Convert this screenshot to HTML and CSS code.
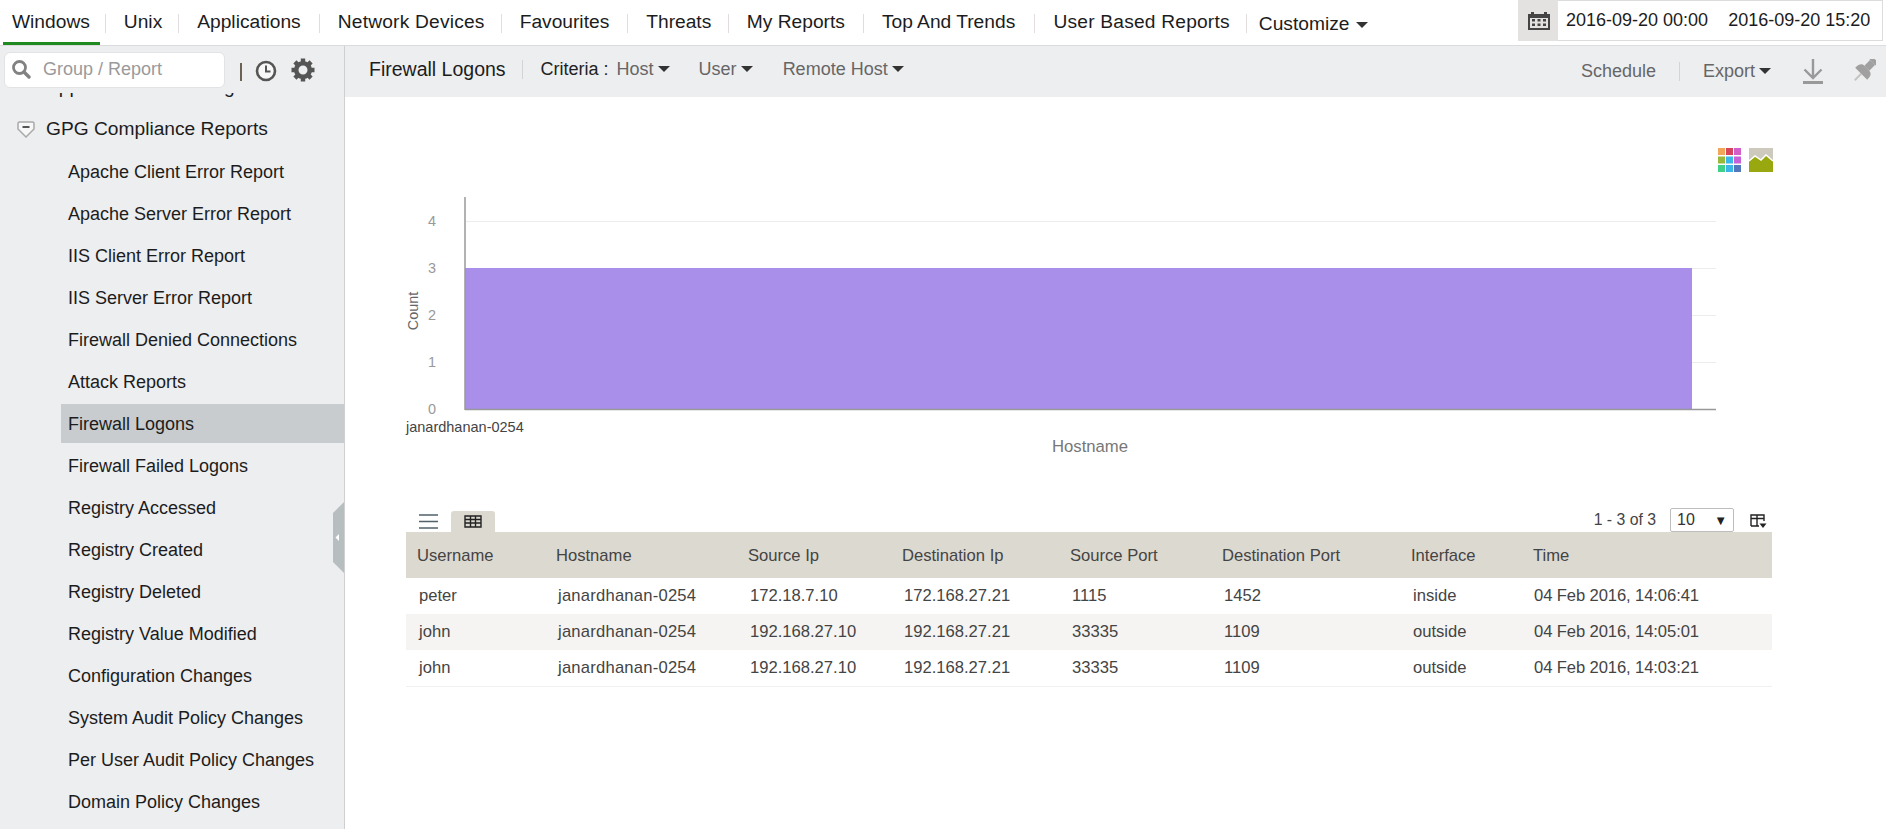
FILE: index.html
```html
<!DOCTYPE html>
<html lang="en">
<head>
<meta charset="utf-8">
<title>Firewall Logons</title>
<link rel="stylesheet" href="styles.css">
</head>
<body>
<header class="topbar">
  <nav class="nav">
    <a class="nav-link nav-first is-active">Windows</a><span class="nav-sep"></span>
    <a class="nav-link nav-tight">Unix</a><span class="nav-sep"></span>
    <a class="nav-link">Applications</a><span class="nav-sep"></span>
    <a class="nav-link nav-wide">Network Devices</a><span class="nav-sep"></span>
    <a class="nav-link">Favourites</a><span class="nav-sep"></span>
    <a class="nav-link nav-snug">Threats</a><span class="nav-sep"></span>
    <a class="nav-link">My Reports</a><span class="nav-sep"></span>
    <a class="nav-link nav-loose">Top And Trends</a><span class="nav-sep"></span>
    <a class="nav-link nav-wide">User Based Reports</a><span class="nav-sep"></span>
    <a class="nav-custom">Customize<i class="caret caret-nav"></i></a>
  </nav>
  <div class="dates">
    <span class="cal-box">
      <svg width="22" height="18" viewBox="0 0 22 18"><path d="M0 2h3V0h3v2h10V0h3v2h3v16H0z" fill="#444"/><rect x="2" y="6" width="18" height="10" fill="#e4e2e0"/><g fill="#444"><rect x="4" y="7" width="3" height="2.5"/><rect x="9.5" y="7" width="3" height="2.5"/><rect x="15" y="7" width="3" height="2.5"/><rect x="4" y="11.5" width="3" height="2.5"/><rect x="9.5" y="11.5" width="3" height="2.5"/><rect x="15" y="11.5" width="3" height="2.5"/></g></svg>
    </span>
    <span class="date-input">
      <span>2016-09-20 00:00</span>
      <span>2016-09-20 15:20</span>
    </span>
  </div>
</header>

<div class="layout">
  <aside class="sidebar">
    <div class="side-tools">
      <div class="search">
        <svg width="20" height="20" viewBox="0 0 20 20"><circle cx="8.5" cy="8.5" r="6" fill="none" stroke="#828282" stroke-width="2.8"/><path d="M13 13l5 5" stroke="#828282" stroke-width="3.4" stroke-linecap="round"/></svg>
        <span class="search-text">Group / Report</span>
      </div>
      <span class="tool-sep"></span>
      <svg class="tool-clock" width="22" height="22" viewBox="0 0 22 22"><circle cx="11" cy="11" r="9" fill="#f8f8f8" stroke="#555" stroke-width="2.6"/><path d="M11 5.5V11.5H15.5" fill="none" stroke="#555" stroke-width="2"/></svg>
      <svg class="tool-gear" width="26" height="26" viewBox="0 0 26 26"><g stroke="#555" stroke-width="4.4"><path d="M13 1.500V24.500M1.500 13H24.500M4.900 4.900L21.100 21.100M21.100 4.900L4.900 21.100"/></g><circle cx="13" cy="13" r="6.800" fill="#edeef0" stroke="#555" stroke-width="4.600"/></svg>
    </div>
    <div class="tree">
      <ul class="tree-list">
        <li class="tree-group tree-clipped">Application Monitoring</li>
        <li class="tree-group">
          <svg class="shield" width="18" height="17" viewBox="0 0 18 17"><path d="M2.500 1H15.500Q17 1 17 2.500V8L9 16L1 8V2.500Q1 1 2.500 1Z" fill="#f7f7f7" stroke="#a9a9a9" stroke-width="1.500"/><rect x="5.500" y="5" width="7" height="2" fill="#555"/></svg>
          GPG Compliance Reports
        </li>
        <li class="tree-item">Apache Client Error Report</li>
        <li class="tree-item">Apache Server Error Report</li>
        <li class="tree-item">IIS Client Error Report</li>
        <li class="tree-item">IIS Server Error Report</li>
        <li class="tree-item">Firewall Denied Connections</li>
        <li class="tree-item">Attack Reports</li>
        <li class="tree-item is-selected">Firewall Logons</li>
        <li class="tree-item">Firewall Failed Logons</li>
        <li class="tree-item">Registry Accessed</li>
        <li class="tree-item">Registry Created</li>
        <li class="tree-item">Registry Deleted</li>
        <li class="tree-item">Registry Value Modified</li>
        <li class="tree-item">Configuration Changes</li>
        <li class="tree-item">System Audit Policy Changes</li>
        <li class="tree-item">Per User Audit Policy Changes</li>
        <li class="tree-item">Domain Policy Changes</li>
      </ul>
    </div>
    <svg class="collapse" width="11" height="71" viewBox="0 0 11 71"><path d="M11 0V71L0 60V11Z" fill="#b7bebf"/><path d="M6 32V39L2.500 35.500Z" fill="#fff"/></svg>
  </aside>

  <main class="main">
    <div class="subbar">
      <h1 class="title">Firewall Logons</h1>
      <span class="sub-sep"></span>
      <span class="criteria">Criteria :</span>
      <a class="filter filter-host">Host<i class="caret"></i></a>
      <a class="filter filter-user">User<i class="caret"></i></a>
      <a class="filter filter-remote">Remote Host<i class="caret"></i></a>
      <div class="sub-actions">
        <a class="action">Schedule</a>
        <span class="sub-sep action-sep"></span>
        <a class="action">Export<i class="caret"></i></a>
        <svg class="icon-down" width="20" height="25" viewBox="0 0 20 25"><path d="M10 0V19M1.500 10.500L10 19L18.500 10.500" fill="none" stroke="#999" stroke-width="2.400"/><rect y="22" width="20" height="3" fill="#999"/></svg>
        <svg class="icon-pin" width="24" height="25" viewBox="0 0 24 25"><g transform="rotate(45 12 12)" fill="#a0a0a0"><rect x="7" y="-4" width="10" height="4" rx="2"/><rect x="8.500" y="0" width="7" height="8"/><path d="M3.500 16Q3.500 8 8.500 8H15.500Q20.500 8 20.500 16Z"/><rect x="11" y="16" width="2" height="9" fill="#c4c4c4"/></g></svg>
      </div>
    </div>

    <svg class="chart" width="1541" height="408" viewBox="345 97 1541 408">
      <rect x="1718" y="148" width="7" height="7" fill="#f2a65a"/>
      <rect x="1726" y="148" width="7" height="7" fill="#d6455d"/>
      <rect x="1734" y="148" width="7" height="7" fill="#d55fc8"/>
      <rect x="1718" y="156.500" width="7" height="7" fill="#9ab83a"/>
      <rect x="1726" y="156.500" width="7" height="7" fill="#3cb6e8"/>
      <rect x="1734" y="156.500" width="7" height="7" fill="#c860d8"/>
      <rect x="1718" y="165" width="7" height="7" fill="#3fd18a"/>
      <rect x="1726" y="165" width="7" height="7" fill="#3cb6e8"/>
      <rect x="1734" y="165" width="7" height="7" fill="#5577bb"/>
      <rect x="1749" y="148" width="24" height="24" fill="#cdc9bd"/>
      <path d="M1749 172V161L1755 156L1761 160L1766 155L1773 161V172Z" fill="#98a80e"/>
      <path d="M1749 161L1755 156L1761 160L1766 155L1773 161" fill="none" stroke="#fff" stroke-width="1.500"/>

      <g stroke="#ececec" stroke-width="1">
        <path d="M466 221.500H1716M466 268.500H1716M466 315.500H1716M466 362.500H1716"/>
      </g>
      <rect x="465" y="268" width="1227" height="141" fill="#a98fea"/>
      <path d="M465 197V410M465 409.500H1716" fill="none" stroke="#999" stroke-width="1.500"/>

      <g class="chart-tick">
        <text x="432" y="226">4</text>
        <text x="432" y="273">3</text>
        <text x="432" y="320">2</text>
        <text x="432" y="367">1</text>
        <text x="432" y="414">0</text>
      </g>
      <text class="chart-axis-y" transform="translate(418 311) rotate(-90)">Count</text>
      <text class="chart-cat" x="406" y="432">janardhanan-0254</text>
      <text class="chart-axis-x" x="1052" y="452">Hostname</text>
    </svg>

    <section class="report">
      <div class="report-tools">
        <svg class="icon-list" width="19" height="15" viewBox="0 0 19 15"><path d="M0 1H19M0 7.500H19M0 14H19" stroke="#51626b" stroke-width="1.500"/></svg>
        <span class="tab-active">
          <svg width="18" height="13" viewBox="0 0 18 13"><path d="M1 1H17V12H1ZM1 4.500H17M1 8H17M6.500 1V12M11.500 1V12" fill="none" stroke="#222" stroke-width="1.400"/></svg>
        </span>
        <span class="pager">1 - 3 of 3</span>
        <span class="page-size">10<i class="page-arrow">▼</i></span>
        <svg class="icon-cols" width="17" height="15" viewBox="0 0 17 15"><path d="M1 12V1H14V7M1 4.500H14M7 1V12M1 12H9" fill="none" stroke="#222" stroke-width="1.400"/><path d="M9.500 9.500H16.500L13 14Z" fill="#222"/></svg>
      </div>
      <table class="grid">
        <colgroup>
          <col class="c1"><col class="c2"><col class="c3"><col class="c4"><col class="c5"><col class="c6"><col class="c7"><col class="c8">
        </colgroup>
        <thead>
          <tr><th>Username</th><th>Hostname</th><th>Source Ip</th><th>Destination Ip</th><th>Source Port</th><th>Destination Port</th><th>Interface</th><th>Time</th></tr>
        </thead>
        <tbody>
          <tr><td>peter</td><td class="host">janardhanan-0254</td><td>172.18.7.10</td><td>172.168.27.21</td><td>1115</td><td>1452</td><td>inside</td><td class="time">04 Feb 2016, 14:06:41</td></tr>
          <tr class="alt"><td>john</td><td class="host">janardhanan-0254</td><td>192.168.27.10</td><td>192.168.27.21</td><td>33335</td><td>1109</td><td>outside</td><td class="time">04 Feb 2016, 14:05:01</td></tr>
          <tr><td>john</td><td class="host">janardhanan-0254</td><td>192.168.27.10</td><td>192.168.27.21</td><td>33335</td><td>1109</td><td>outside</td><td class="time">04 Feb 2016, 14:03:21</td></tr>
        </tbody>
      </table>
    </section>
  </main>
</div>
</body>
</html>
```
FILE: styles.css
```css
* { box-sizing: border-box; }
html, body { margin: 0; height: 100%; overflow: hidden; }
body { font-family: "Liberation Sans", Arial, sans-serif; color: #222; background: #fff; }

.topbar { display: flex; height: 46px; border-bottom: 1px solid #dcdcdc; justify-content: space-between; }
.nav { display: flex; align-items: flex-start; padding-left: 3px; font-size: 19.2px; color: #1c1c1c; }
.nav-link { display: block; height: 45px; padding: 0 18px; line-height: 44px; border-bottom: 3px solid transparent; white-space: nowrap; }
.nav-first { padding: 0 10px 0 9px; margin-right: 5px; }
.nav-tight { padding-right: 16px; }
.nav-snug { padding-right: 16.5px; }
.nav-loose { padding-right: 19.2px; }
.nav-wide { padding-right: 16px; letter-spacing: 0.200px; }
.is-active { border-bottom-color: #1f8a1f; }
.nav-sep { width: 1px; height: 19px; margin-top: 14px; background: #e2dcdc; }
.nav-custom { display: block; padding-left: 12px; line-height: 48px; white-space: nowrap; }
.caret { display: inline-block; width: 0; height: 0; margin-left: 4px; vertical-align: 3px; border-style: solid; border-width: 6px 6px 0; border-color: #333 transparent transparent; }
.caret-nav { margin-left: 7px; vertical-align: 2px; }

.dates { display: flex; height: 41px; margin-right: 3px; font-size: 18px; color: #1c1c1c; }
.cal-box { display: flex; width: 40px; padding-left: 2px; align-items: center; justify-content: center; background: #e4e2e0; }
.date-input { display: flex; width: 325px; gap: 20px; padding-left: 8px; line-height: 38px; border: 1px solid #dcdcdc; border-left: 0; white-space: nowrap; }

.layout { display: flex; height: 783px; }
.sidebar { position: relative; display: flex; flex-direction: column; flex: none; width: 345px; background: #edeef0; border-right: 1px solid #cfcfcf; overflow: hidden; }
.side-tools { display: flex; flex: none; height: 47px; padding: 6px 0 0 4px; align-items: flex-start; }
.search { display: flex; width: 221px; height: 36px; padding: 0 0 2px 6px; gap: 12px; align-items: center; background: #fff; border: 1px solid #e2e3e5; border-radius: 6px; font-size: 18px; color: #9a9a9a; }
.tool-sep { width: 2px; height: 18px; margin: 11px 0 0 15px; background: #6b6253; }
.tool-clock { margin: 8px 0 0 13px; }
.tool-gear { margin: 5px 0 0 13px; }

.tree { flex: 1; overflow: hidden; }
.tree-list { list-style: none; margin: -27px 0 0; padding: 0; }
.tree-group { display: flex; height: 42px; align-items: center; padding-left: 46px; font-size: 19.2px; color: #1c1c1c; position: relative; }
.tree-clipped + .tree-group { margin-bottom: 1.500px; }
.shield { position: absolute; left: 17px; top: 13px; }
.tree-item { height: 39px; margin: 0 0 3px 61px; padding-left: 7px; line-height: 41px; font-size: 18px; color: #1c1c1c; }
.is-selected { background: #c9ccce; }
.collapse { position: absolute; right: 0; top: 456px; }

.main { flex: 1; min-width: 0; }
.subbar { display: flex; height: 51px; padding: 0 0 4px 24px; align-items: center; background: #edeef0; font-size: 18px; }
.title { margin: 0; font-size: 19.500px; font-weight: normal; color: #1c1c1c; }
.sub-sep { width: 1px; height: 19px; margin: 0 18px 0 16px; background: #d4d4d4; }
.criteria { color: #222; }
.filter { color: #666; white-space: nowrap; }
.filter-host { margin-left: 8px; }
.filter-user { margin-left: 29px; }
.filter-remote { margin-left: 30px; }
.sub-actions { display: flex; margin: 4px 0 0 auto; padding-right: 10px; align-items: center; color: #666; }
.action { white-space: nowrap; }
.action-sep { margin: 0 23px 0 23px; }
.icon-down { margin-left: 32px; }
.icon-pin { margin-left: 29px; }

.chart { display: block; }
.chart text { font-family: "Liberation Sans", Arial, sans-serif; }
.chart-tick { font-size: 14.400px; fill: #999; text-anchor: middle; }
.chart-axis-y { font-size: 14.400px; fill: #666; text-anchor: middle; }
.chart-cat { font-size: 14.500px; fill: #444; }
.chart-axis-x { font-size: 16.700px; fill: #777; }

.report { margin: 0 114px 0 61px; }
.report-tools { display: flex; height: 27px; align-items: flex-end; font-size: 15.800px; color: #444; }
.icon-list { margin: 0 0 3px 13px; }
.tab-active { display: flex; width: 44px; height: 21px; margin-left: 13px; align-items: center; justify-content: center; background: #dcd9d1; border-radius: 3px 3px 0 0; }
.pager { margin: 0 14px 3px auto; }
.page-size { display: flex; width: 64px; height: 24px; padding: 0 6px; align-items: center; justify-content: space-between; background: #fff; border: 1px solid #bdbdbd; border-radius: 2px; font-size: 16px; color: #333; }
.page-arrow { font-size: 13px; font-style: normal; color: #222; }
.icon-cols { margin: 0 5px 3px 16px; }

.grid { width: 100%; table-layout: fixed; border-collapse: collapse; font-size: 16.600px; color: #444; }
.c1 { width: 139px; } .c2 { width: 192px; } .c3 { width: 154px; } .c4 { width: 168px; }
.c5 { width: 152px; } .c6 { width: 189px; } .c7 { width: 122px; }
.grid th { height: 46px; padding: 1px 0 0 11px; background: #dcd9d1; font-weight: normal; text-align: left; white-space: nowrap; }
.grid td { height: 36px; padding: 0 0 0 13px; white-space: nowrap; }
.grid td.host { letter-spacing: 0.220px; }
.grid td.time { padding-left: 12px; letter-spacing: -0.100px; }
.grid tr.alt td { background: #f5f4f2; }
.grid tbody tr:last-child td { border-bottom: 1px solid #f0f0f0; }
```
